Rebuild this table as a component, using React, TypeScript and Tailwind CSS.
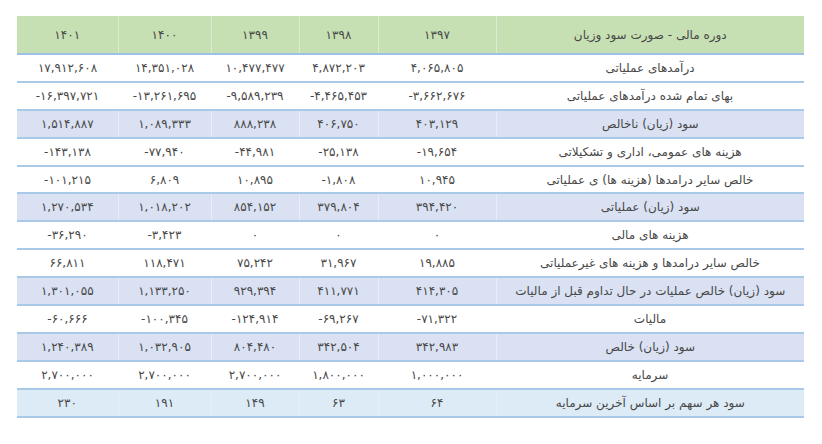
type Row = {
  label: string
  values: string[]
  tone?: "blue" | "light"
}

const years = ["۱۳۹۷", "۱۳۹۸", "۱۳۹۹", "۱۴۰۰", "۱۴۰۱"]

const rows: Row[] = [
  { label: "درآمدهای عملیاتی", values: ["۴,۰۶۵,۸۰۵", "۴,۸۷۲,۲۰۳", "۱۰,۴۷۷,۴۷۷", "۱۴,۳۵۱,۰۲۸", "۱۷,۹۱۲,۶۰۸"] },
  { label: "بهای تمام شده درآمدهای عملیاتی", values: ["-۳,۶۶۲,۶۷۶", "-۴,۴۶۵,۴۵۳", "-۹,۵۸۹,۲۳۹", "-۱۳,۲۶۱,۶۹۵", "-۱۶,۳۹۷,۷۲۱"] },
  { label: "سود (زیان) ناخالص", values: ["۴۰۳,۱۲۹", "۴۰۶,۷۵۰", "۸۸۸,۲۳۸", "۱,۰۸۹,۳۳۳", "۱,۵۱۴,۸۸۷"], tone: "blue" },
  { label: "هزینه های عمومی، اداری و تشکیلاتی", values: ["-۱۹,۶۵۴", "-۲۵,۱۳۸", "-۴۴,۹۸۱", "-۷۷,۹۴۰", "-۱۴۳,۱۳۸"] },
  { label: "خالص سایر درامدها (هزینه ها) ی عملیاتی", values: ["۱۰,۹۴۵", "-۱,۸۰۸", "۱۰,۸۹۵", "۶,۸۰۹", "-۱۰۱,۲۱۵"] },
  { label: "سود (زیان) عملیاتی", values: ["۳۹۴,۴۲۰", "۳۷۹,۸۰۴", "۸۵۴,۱۵۲", "۱,۰۱۸,۲۰۲", "۱,۲۷۰,۵۳۴"], tone: "blue" },
  { label: "هزینه های مالی", values: ["۰", "۰", "۰", "-۳,۴۲۳", "-۳۶,۲۹۰"] },
  { label: "خالص سایر درامدها و هزینه های غیرعملیاتی", values: ["۱۹,۸۸۵", "۳۱,۹۶۷", "۷۵,۲۴۲", "۱۱۸,۴۷۱", "۶۶,۸۱۱"] },
  { label: "سود (زیان) خالص عملیات در حال تداوم قبل از مالیات", values: ["۴۱۴,۳۰۵", "۴۱۱,۷۷۱", "۹۲۹,۳۹۴", "۱,۱۳۳,۲۵۰", "۱,۳۰۱,۰۵۵"], tone: "blue" },
  { label: "مالیات", values: ["-۷۱,۳۲۲", "-۶۹,۲۶۷", "-۱۲۴,۹۱۴", "-۱۰۰,۳۴۵", "-۶۰,۶۶۶"] },
  { label: "سود (زیان) خالص", values: ["۳۴۲,۹۸۳", "۳۴۲,۵۰۴", "۸۰۴,۴۸۰", "۱,۰۳۲,۹۰۵", "۱,۲۴۰,۳۸۹"], tone: "blue" },
  { label: "سرمایه", values: ["۱,۰۰۰,۰۰۰", "۱,۸۰۰,۰۰۰", "۲,۷۰۰,۰۰۰", "۲,۷۰۰,۰۰۰", "۲,۷۰۰,۰۰۰"] },
  { label: "سود هر سهم بر اساس آخرین سرمایه", values: ["۶۴", "۶۳", "۱۴۹", "۱۹۱", "۲۳۰"], tone: "light" },
]

function rowClass(tone?: Row["tone"]) {
  if (tone === "blue") return "bg-[#d9e1f2] border-t border-t-[#9bc2e6]"
  if (tone === "light") return "bg-[#ddebf7] border-t border-t-[#9bc2e6]"
  return "bg-white"
}

export default function App() {
  return (
    <div className="w-[822px] h-[444px] bg-white pt-4 pl-[17px]">
      <table
        dir="rtl"
        className="w-[787px] table-fixed border-collapse text-[12px] text-[#484848] font-['DejaVu_Sans',sans-serif]"
      >
        <colgroup>
          <col className="w-[308px]" />
          <col className="w-[118px]" />
          <col className="w-[79px]" />
          <col className="w-[88px]" />
          <col className="w-[93px]" />
          <col className="w-[101px]" />
        </colgroup>
        <thead>
          <tr className="h-[38px] bg-[#c6e0b4] border-b-2 border-b-[#9bc2e6]">
            <th className="font-normal text-center">دوره مالی - صورت سود وزیان</th>
            {years.map((y) => (
              <th key={y} className="font-normal text-center border-r border-r-[#dcebd1]">
                {y}
              </th>
            ))}
          </tr>
        </thead>
        <tbody>
          {rows.map((r) => (
            <tr key={r.label} className={`h-[27.9px] border-b-2 border-b-[#a9c9e8] ${rowClass(r.tone)}`}>
              <td className="text-center p-0">{r.label}</td>
              {r.values.map((v, i) => (
                <td
                  key={i}
                  className={`text-center p-0 ${r.tone ? "border-r border-r-[#e8eef8]" : ""}`}
                >
                  <span dir="ltr">{v}</span>
                </td>
              ))}
            </tr>
          ))}
        </tbody>
      </table>
    </div>
  )
}
